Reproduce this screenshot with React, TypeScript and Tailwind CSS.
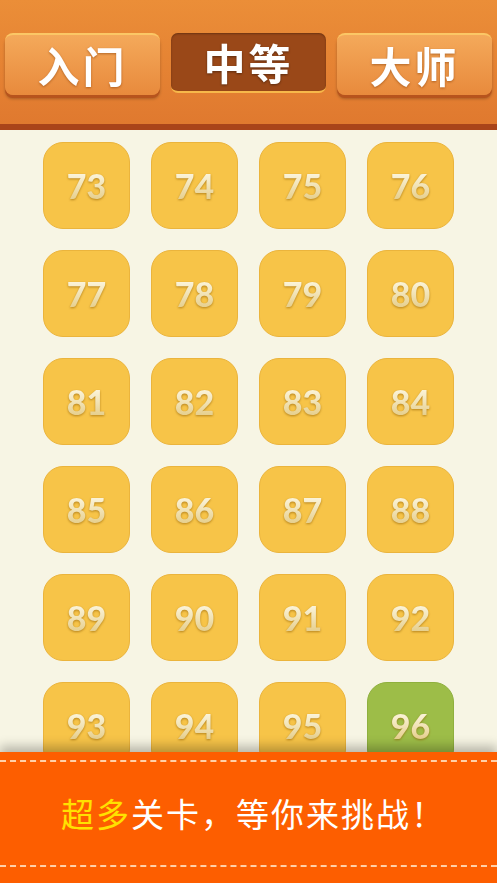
import React from "react";

const nums = Array.from({ length: 24 }, (_, i) => 73 + i);

function Tab({ label, active }: { label: string; active?: boolean }) {
  if (active) {
    return (
      <div className="flex h-[60px] w-[155px] items-center justify-center rounded-[7px] bg-[#9a4818] border-b-2 border-[#f7b84a] shadow-[inset_0_1px_2px_rgba(0,0,0,0.3)]">
        <span className="text-[42px] font-bold leading-none text-white tracking-[3px] [font-family:'Noto_Sans_CJK_SC',sans-serif] drop-shadow-[0_1px_1px_rgba(0,0,0,0.4)]">
          {label}
        </span>
      </div>
    );
  }
  return (
    <div className="flex h-[62px] w-[155px] items-center justify-center rounded-[8px] border-t-2 border-[#fbc766] bg-gradient-to-b from-[#f4a95a] to-[#e88a3c] shadow-[0_3px_0_#b7541d,0_4px_3px_rgba(0,0,0,0.25)]">
      <span className="text-[42px] font-bold leading-none text-white tracking-[3px] [font-family:'Noto_Sans_CJK_SC',sans-serif] drop-shadow-[0_1px_1px_rgba(120,50,0,0.5)]">
        {label}
      </span>
    </div>
  );
}

export default function App() {
  return (
    <div className="relative h-[883px] w-[497px] overflow-hidden bg-[#f7f5e4]">
      <div className="flex h-[130px] flex-col bg-gradient-to-b from-[#eb8e38] to-[#e0792f] border-b-[6px] border-[#a9441a]">
        <div className="mt-[33px] flex justify-between px-[5px]">
          <Tab label="入门" />
          <Tab label="中等" active />
          <Tab label="大师" />
        </div>
      </div>
      <div className="grid grid-cols-4 gap-x-[21px] gap-y-[21px] px-[43px] pt-[12px]">
        {nums.map((n) => (
          <div
            key={n}
            className={
              n === 96
                ? "flex h-[87px] w-[87px] items-center justify-center rounded-[20px] border border-[#8fb03e] bg-[#9dbd48]"
                : "flex h-[87px] w-[87px] items-center justify-center rounded-[20px] border border-[#ebb43c] bg-[#f7c448]"
            }
          >
            <span className="bg-gradient-to-b from-[#fffbe8] to-[#e3ca82] bg-clip-text text-[34px] font-black leading-none text-transparent [font-family:'Lato',sans-serif] drop-shadow-[0_1px_1px_rgba(140,90,0,0.6)]">
              {n}
            </span>
          </div>
        ))}
      </div>
      <div className="absolute bottom-0 left-0 h-[131px] w-[497px] bg-[#fd5e00] shadow-[0_-6px_10px_rgba(0,0,0,0.25)]">
        <div className="mt-[8px] border-t-2 border-dashed border-[#ffd0a8]" />
        <div className="flex h-[103px] items-center justify-center">
          <span className="pl-[10px] text-[33px] leading-none text-white tracking-[2px] [font-family:'Noto_Sans_CJK_SC',sans-serif]">
            <span className="text-[#ffe100]">超多</span>关卡，等你来挑战！
          </span>
        </div>
        <div className="border-t-2 border-dashed border-[#ffd0a8]" />
      </div>
    </div>
  );
}
